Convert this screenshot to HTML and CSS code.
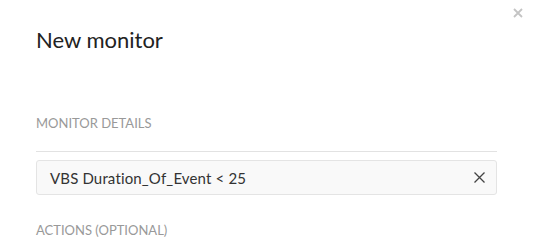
FILE: index.html
```html
<!DOCTYPE html>
<html>
<head>
<meta charset="utf-8">
<link rel="stylesheet" href="styles.css">
</head>
<body>
<div class="modal">
  <button class="close" aria-label="Close">
    <svg width="10" height="10" viewBox="0 0 10 10"><path d="M1 1L9 9M9 1L1 9" stroke="#c4c4c4" stroke-width="1.8" fill="none"/></svg>
  </button>
  <h1 class="title">New monitor</h1>
  <section class="section">
    <h2 class="label">MONITOR DETAILS</h2>
    <div class="divider"></div>
    <div class="input">
      <span class="input-text">VBS Duration_Of_Event &lt; 25</span>
      <svg class="clear" width="11" height="11" viewBox="0 0 11 11"><path d="M0.5 0.5L10.5 10.5M10.5 0.5L0.5 10.5" stroke="#444" stroke-width="1.3" fill="none"/></svg>
    </div>
  </section>
  <h2 class="label actions">ACTIONS (OPTIONAL)</h2>
</div>
</body>
</html>
```

FILE: styles.css
```css
html, body {
  margin: 0;
  padding: 0;
  background: #fff;
}
body {
  font-family: Lato, "Open Sans", sans-serif;
  width: 537px;
  height: 239px;
  overflow: hidden;
}
.modal {
  position: relative;
  padding: 24px 40px 0 36px;
}
.close {
  position: absolute;
  top: 8px;
  right: 14px;
  border: 0;
  background: none;
  padding: 0;
  width: 10px;
  height: 10px;
  display: flex;
}
.title {
  margin: 0;
  font-size: 22px;
  font-weight: 400;
  color: #222;
  line-height: 32px;
}
.section {
  margin-top: 59px;
}
.label {
  margin: 0;
  font-size: 13px;
  font-weight: 400;
  color: #999;
  line-height: 16px;
}
.divider {
  height: 1px;
  background: #e2e2e2;
  margin-top: 20px;
}
.input {
  box-sizing: border-box;
  margin-top: 8px;
  height: 35px;
  border: 1px solid #e4e4e4;
  border-radius: 3px;
  background: #f9f9f9;
  display: flex;
  align-items: center;
  justify-content: space-between;
  padding: 0 11px 0 13px;
}
.input-text {
  font-size: 15px;
  letter-spacing: 0.15px;
  color: #333;
}
.actions {
  margin-top: 27px;
}
```
